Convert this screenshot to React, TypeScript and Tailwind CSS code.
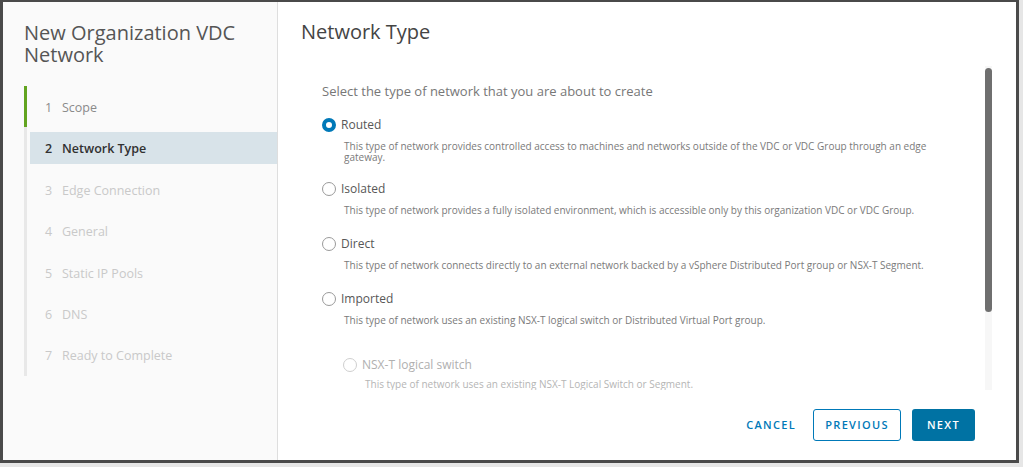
import React from "react";

const font = { fontFamily: '"Open Sans", "Noto Sans", sans-serif' };

function Step({ n, label, state, first }: { n: number; label: string; state: "done" | "current" | "disabled"; first?: boolean }) {
  const border = first ? "border-[#62a420]" : "border-[#e8e8e8]";
  const color =
    state === "done" ? "text-[#8a8a8a]" : state === "current" ? "text-[#313131] font-semibold" : "text-[#c9c9c9]";
  return (
    <div className={`h-[41.43px] border-l-[3px] ${border} flex items-center pl-[3px]`}>
      <div className={`h-[32px] flex-1 flex items-center pl-[15px] pt-[3px] text-[12.5px] ${color} ${state === "current" ? "bg-[#d8e3e9]" : ""}`}>
        <span className="w-[17px]">{n}</span>
        <span>{label}</span>
      </div>
    </div>
  );
}

function Radio({ checked, disabled }: { checked?: boolean; disabled?: boolean }) {
  if (checked) {
    return <span className="w-[14px] h-[14px] rounded-full border-[4px] border-[#0079b8] bg-white shrink-0" />;
  }
  return (
    <span
      className={`w-[14px] h-[14px] rounded-full border shrink-0 bg-white ${disabled ? "border-[#cfcfcf]" : "border-[#9a9a9a]"}`}
    />
  );
}

function Option({
  label,
  desc,
  checked,
  disabled,
  className,
  descGap = "mt-[8px]",
}: {
  label: string;
  desc: string;
  checked?: boolean;
  disabled?: boolean;
  className?: string;
  descGap?: string;
}) {
  return (
    <div className={className}>
      <div className="flex items-center h-[16px] gap-[5px]">
        <Radio checked={checked} disabled={disabled} />
        <span className={`text-[12px] leading-[16px] ${disabled ? "text-[#b0b0b0]" : "text-[#575757]"}`}>{label}</span>
      </div>
      <div
        className={`${descGap} ml-[22px] max-w-[600px] text-[10px] leading-[11px] ${disabled ? "text-[#b5b5b5]" : "text-[#7a7a7a]"}`}
      >
        {desc}
      </div>
    </div>
  );
}

export default function App() {
  return (
    <div className="w-[1023px] h-[467px] bg-[#e6e6e6] overflow-hidden" style={font}>
      <div className="w-[1019px] h-[463px] border-l-[3px] border-r-[3px] border-t-[2px] border-b-[3px] border-[#4a4a4a] bg-white flex">
        {/* Left wizard nav */}
        <div className="w-[275px] h-full bg-[#fafafa] border-r border-[#dedede] flex flex-col">
          <div className="pl-[21px] pt-[20px] text-[20px] leading-[22px] text-[#555555]">
            <div>New Organization VDC</div>
            <div>Network</div>
          </div>
          <div className="ml-[21px] mt-[20px]">
            <Step n={1} label="Scope" state="done" first />
            <Step n={2} label="Network Type" state="current" />
            <Step n={3} label="Edge Connection" state="disabled" />
            <Step n={4} label="General" state="disabled" />
            <Step n={5} label="Static IP Pools" state="disabled" />
            <Step n={6} label="DNS" state="disabled" />
            <Step n={7} label="Ready to Complete" state="disabled" />
          </div>
        </div>

        {/* Right content */}
        <div className="flex-1 flex flex-col">
          <div className="pl-[23px] pt-[18px] text-[20px] leading-[24px] text-[#444444]">Network Type</div>
          <div className="mt-[22px] h-[324px] flex pl-[23px] pr-[24px]">
            <div className="flex-1 overflow-hidden pl-[21px] pt-[17px]">
              <div className="text-[13px] leading-[16px] text-[#777777]">
                Select the type of network that you are about to create
              </div>
              <Option
                className="mt-[18px]"
                checked
                label="Routed"
                desc="This type of network provides controlled access to machines and networks outside of the VDC or VDC Group through an edge gateway."
              />
              <Option
                className="mt-[18px]"
                label="Isolated"
                desc="This type of network provides a fully isolated environment, which is accessible only by this organization VDC or VDC Group."
              />
              <Option
                className="mt-[20px]"
                label="Direct"
                desc="This type of network connects directly to an external network backed by a vSphere Distributed Port group or NSX-T Segment."
              />
              <Option
                className="mt-[20px]"
                label="Imported"
                desc="This type of network uses an existing NSX-T logical switch or Distributed Virtual Port group."
              />
              <div className="pl-[21px]">
                <Option
                  className="mt-[31px]"
                  disabled
                  descGap="mt-[6px]"
                  label="NSX-T logical switch"
                  desc="This type of network uses an existing NSX-T Logical Switch or Segment."
                />
              </div>
            </div>
            <div className="w-[7px] bg-[#f7f7f7]">
              <div className="mt-[2px] h-[244px] rounded-full bg-[#6f6f6f]" />
            </div>
          </div>
          <div className="flex-1 flex items-start justify-end pt-[19px] pr-[41px] gap-[11px]">
            <button className="h-[32px] px-[6px] text-[11px] font-semibold tracking-[0.12em] text-[#0079b8]">
              CANCEL
            </button>
            <button className="h-[32px] w-[88px] rounded-[3px] border border-[#0079b8] text-[11px] font-semibold tracking-[0.12em] text-[#0079b8] bg-white">
              PREVIOUS
            </button>
            <button className="h-[32px] w-[63px] rounded-[3px] bg-[#0072a3] text-[11px] font-semibold tracking-[0.12em] text-white">
              NEXT
            </button>
          </div>
        </div>
      </div>
    </div>
  );
}
